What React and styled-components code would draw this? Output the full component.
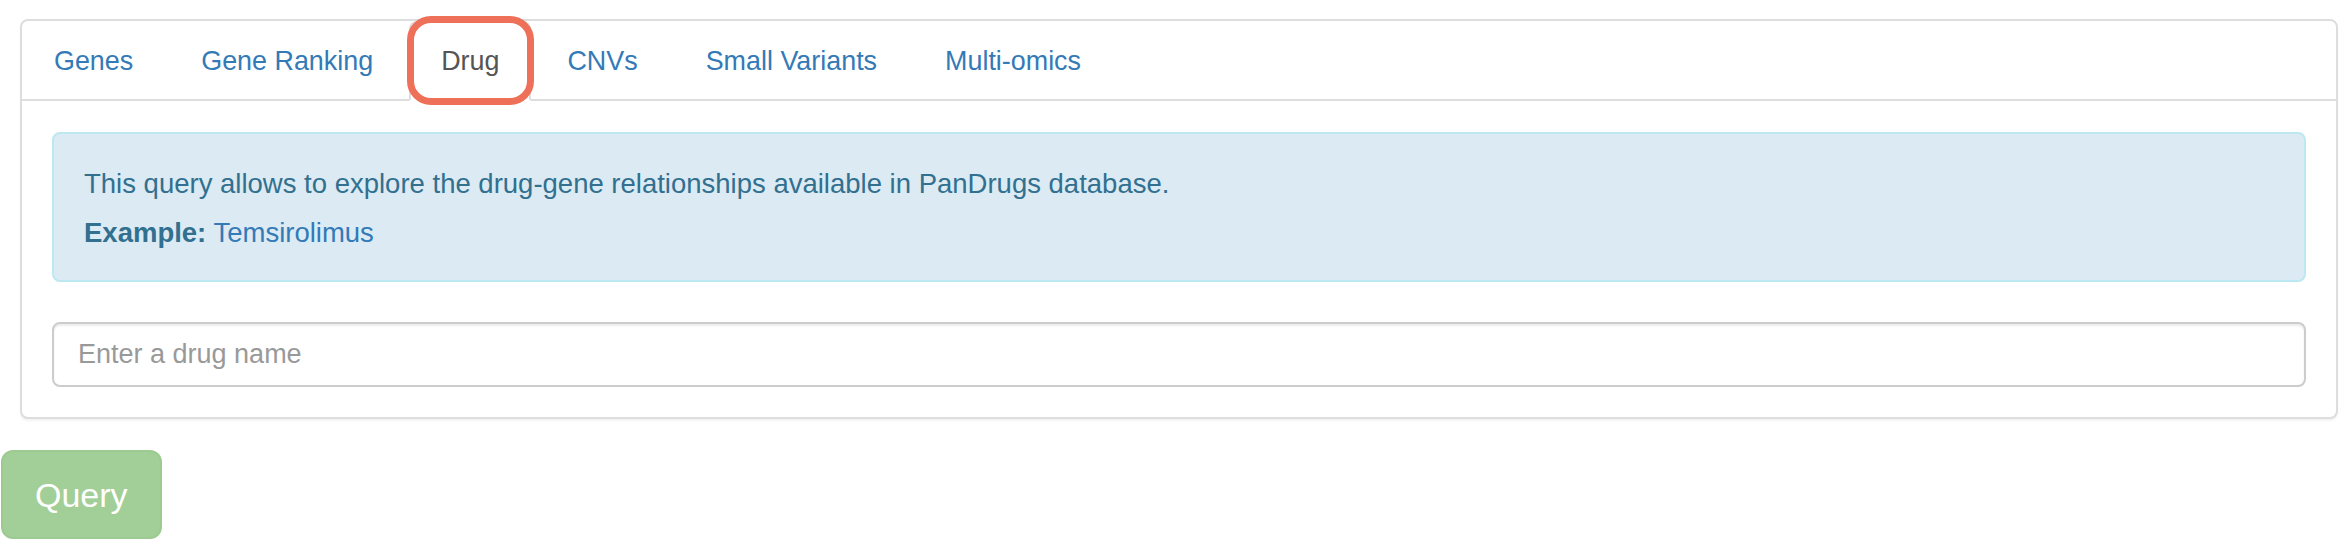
import React from "react";
import styled, { createGlobalStyle } from "styled-components";

const GlobalStyle = createGlobalStyle`
  body {
    margin: 0;
    background: #fff;
    font-family: "Liberation Sans", Arial, Helvetica, sans-serif;
  }
`;

const Page = styled.div`
  display: flex;
  flex-direction: column;
  align-items: flex-start;
`;

const Panel = styled.div`
  align-self: stretch;
  margin: 19px 12px 0 20px;
  border: 2px solid #ddd;
  border-radius: 8px;
  box-shadow: 0 2px 2px rgba(0, 0, 0, 0.05);
  background: #fff;
`;

const TabList = styled.ul`
  display: flex;
  margin: 0;
  padding: 0;
  list-style: none;
  border-bottom: 2px solid #ddd;
`;

const Tab = styled.li`
  position: relative;
  margin: 0 4px -2px 0;
  padding: 18px 30px;
  border: 2px solid transparent;
  border-radius: 8px 8px 0 0;
  line-height: 40px;
  font-size: 26.9px;
  cursor: pointer;
  color: ${(p) => (p.$active ? "#555" : "#337ab7")};
  background: ${(p) => (p.$active ? "#fff" : "transparent")};
  border-color: ${(p) => (p.$active ? "#ddd #ddd transparent" : "transparent")};
`;

// orange annotation ring drawn over the selected tab
const Highlight = styled.span`
  position: absolute;
  top: -7px;
  left: -4px;
  right: -5px;
  bottom: -6px;
  border: 7px solid #ee7058;
  border-radius: 24px;
  pointer-events: none;
`;

const Body = styled.div`
  padding: 31px 30px 30px;
`;

const Alert = styled.div`
  margin-bottom: 40px;
  padding: 30px 30px 27px;
  border: 2px solid #bce8f1;
  border-radius: 8px;
  background: #dceaf4;
  color: #31708f;
  font-size: 27.5px;
`;

const AlertLine = styled.p`
  margin: 0 0 ${(p) => (p.$last ? "0" : "9px")};
  line-height: 40px;
`;

const Link = styled.a`
  color: #337ab7;
  text-decoration: none;
`;

const Input = styled.input`
  display: block;
  box-sizing: border-box;
  width: 100%;
  height: 65px;
  padding: 0 24px;
  border: 2px solid #ccc;
  border-radius: 8px;
  box-shadow: inset 0 2px 2px rgba(0, 0, 0, 0.075);
  font-family: inherit;
  font-size: 27px;
  color: #555;
  outline: none;

  &::placeholder {
    color: #999;
  }
`;

const QueryButton = styled.button`
  margin: 31px 0 0 1px;
  padding: 19px 32px 18px;
  border: 2px solid #9ccb92;
  border-radius: 12px;
  background: #a2ce98;
  color: #fff;
  font-family: inherit;
  font-size: 34px;
  line-height: 48px;
  cursor: not-allowed;
`;

const tabs = ["Genes", "Gene Ranking", "Drug", "CNVs", "Small Variants", "Multi-omics"];

export default function App() {
  const active = "Drug";
  return (
    <>
      <GlobalStyle />
      <Page>
        <Panel>
          <TabList>
            {tabs.map((t) => (
              <Tab key={t} $active={t === active}>
                {t}
                {t === active && <Highlight />}
              </Tab>
            ))}
          </TabList>
          <Body>
            <Alert>
              <AlertLine>
                This query allows to explore the drug-gene relationships available in PanDrugs database.
              </AlertLine>
              <AlertLine $last>
                <strong>Example:</strong> <Link href="#">Temsirolimus</Link>
              </AlertLine>
            </Alert>
            <Input placeholder="Enter a drug name" />
          </Body>
        </Panel>
        <QueryButton disabled>Query</QueryButton>
      </Page>
    </>
  );
}
